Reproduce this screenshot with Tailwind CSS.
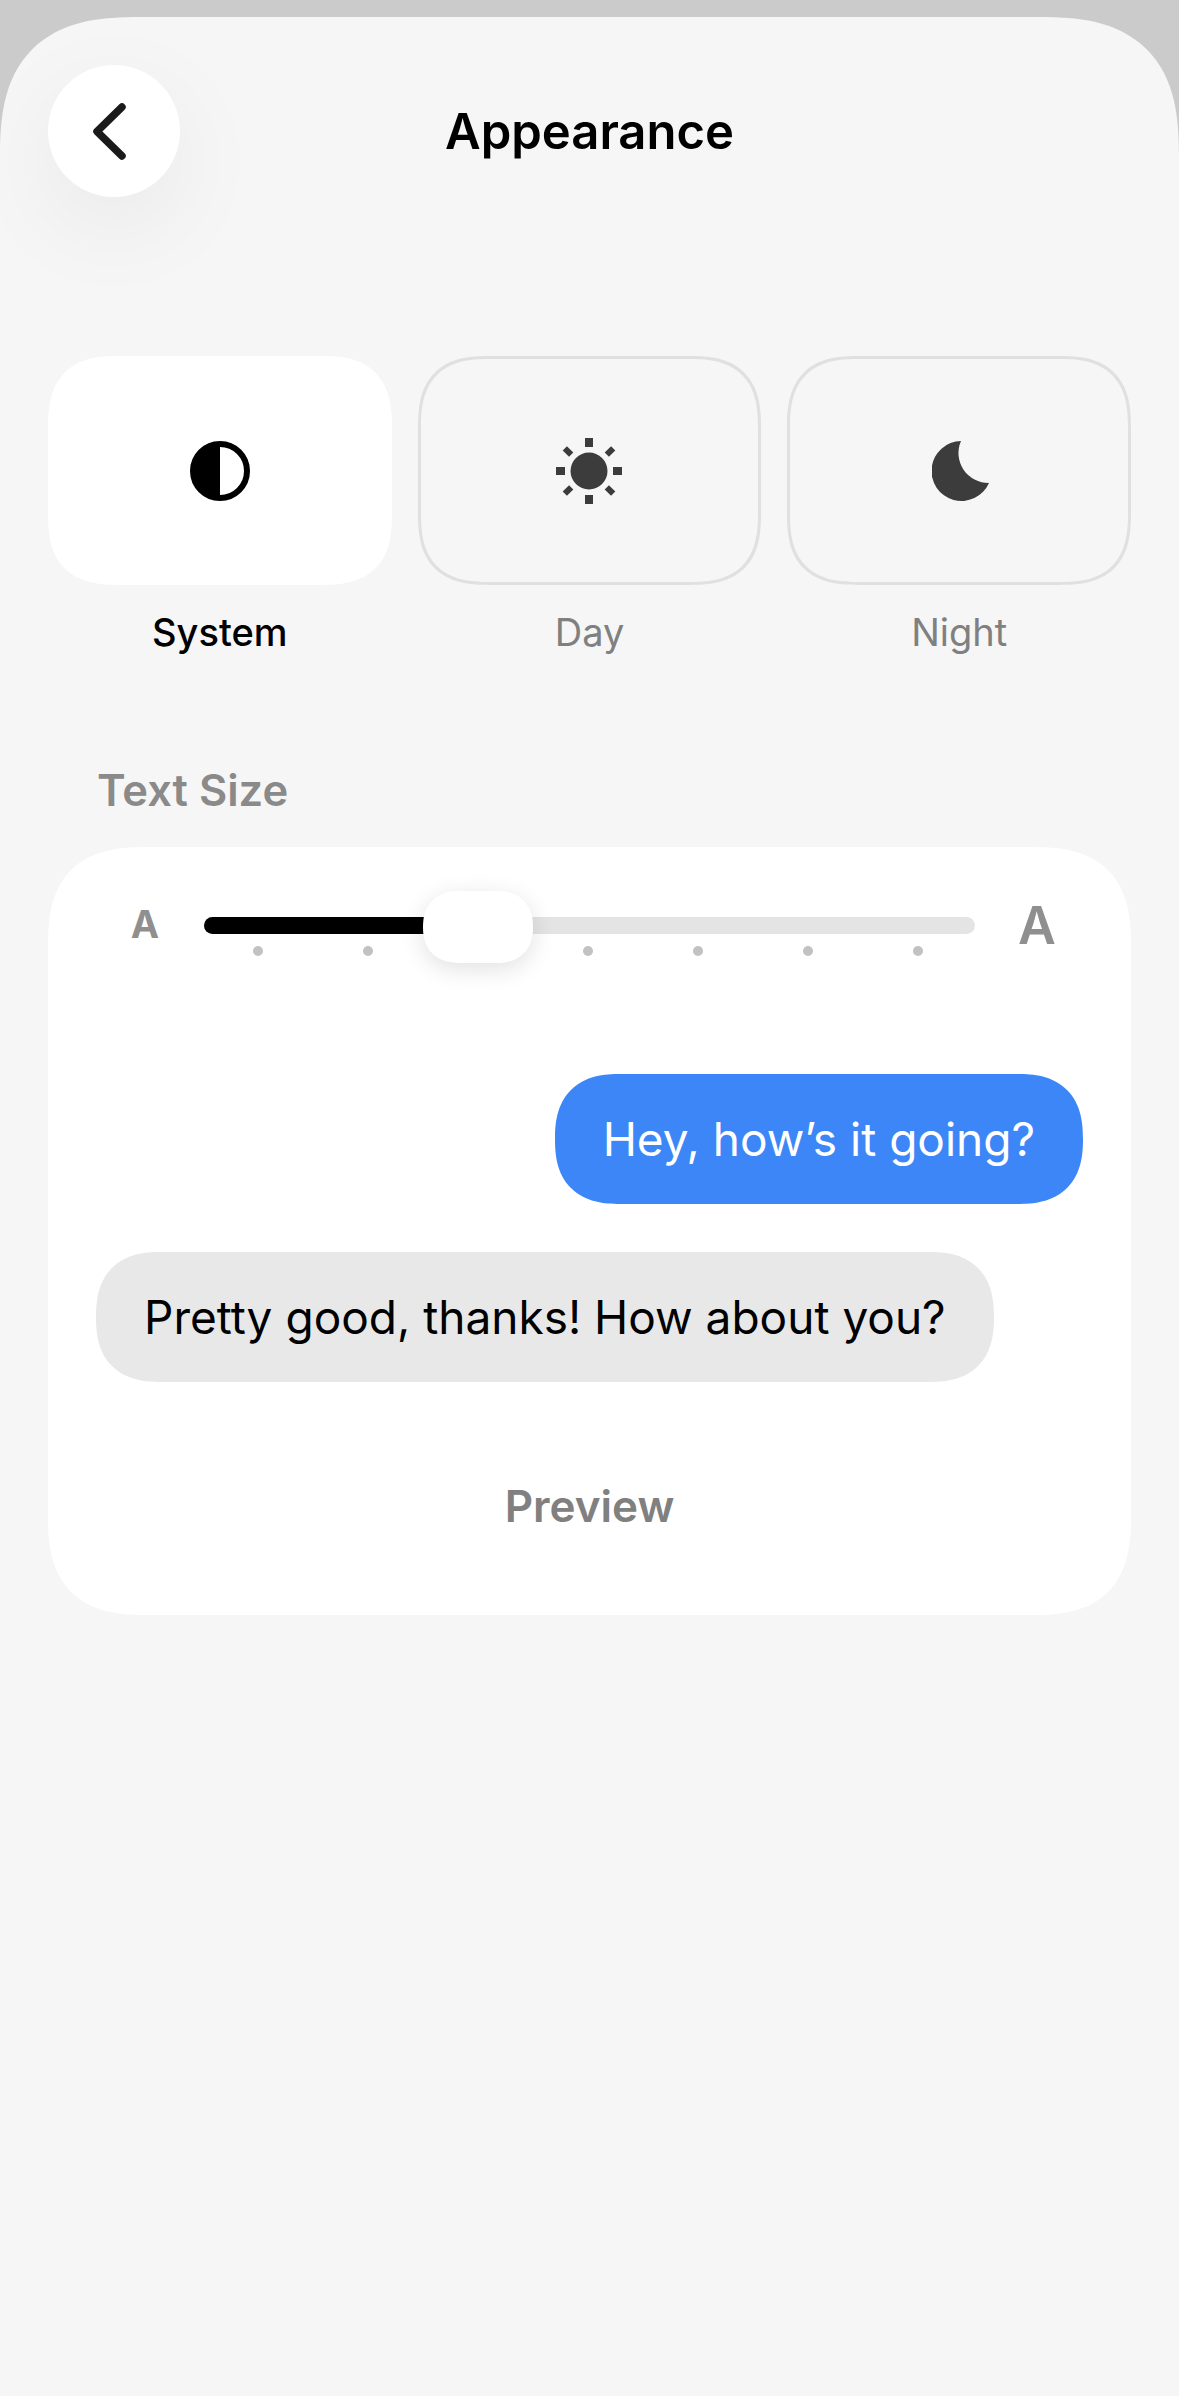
<!DOCTYPE html>
<html lang="en">
  <head>
    <meta charset="UTF-8" />
    <meta name="viewport" content="width=device-width, initial-scale=1.0" />
    <title>Appearance</title>
    <script src="https://cdn.jsdelivr.net/npm/@tailwindcss/browser@4"></script>
  </head>
  <body class="bg-[#cbcbcb] font-[Inter,sans-serif] pt-[17px] h-[2396px] overflow-hidden">
    <div class="bg-[#f6f6f6] h-[2379px] rounded-t-[140px] [corner-shape:superellipse(1.4)] px-[48px] pt-[48px]">
      <!-- header -->
      <div class="flex items-center">
        <button class="w-[132px] h-[132px] rounded-full bg-white shadow-[0_30px_100px_rgba(0,0,0,0.06)] flex items-center justify-center shrink-0">
          <svg class="mr-[9px]" width="33" height="57" viewBox="0 0 33 57" fill="none" stroke="#1a1a1a" stroke-width="7.5" stroke-linecap="round" stroke-linejoin="round">
            <path d="M29 4 L4 28.5 L29 53" />
          </svg>
        </button>
        <h1 class="flex-1 text-center text-[49px] leading-[76px] mt-[2px] font-semibold text-black pr-[132px]">Appearance</h1>
      </div>

      <!-- theme options -->
      <div class="grid grid-cols-3 gap-[26px] mt-[159px]">
        <div class="flex flex-col items-center">
          <div class="w-full h-[229px] rounded-[72px] [corner-shape:superellipse(1.4)] bg-white flex items-center justify-center">
            <svg width="60" height="60" viewBox="0 0 60 60">
              <circle cx="30" cy="30" r="27" fill="none" stroke="#000" stroke-width="6" />
              <path d="M30 3 A27 27 0 0 0 30 57 Z" fill="#000" />
            </svg>
          </div>
          <span class="mt-[25px] text-[38px] leading-[44px] font-medium text-black">System</span>
        </div>
        <div class="flex flex-col items-center">
          <div class="w-full h-[229px] rounded-[72px] [corner-shape:superellipse(1.4)] border-[3px] border-[#e0e0e0] flex items-center justify-center">
            <svg width="66" height="66" viewBox="0 0 66 66" fill="#3c3c3c">
              <circle cx="33" cy="33" r="18.5" />
              <rect x="29" y="0" width="8" height="9" />
              <rect x="29" y="57" width="8" height="9" />
              <rect x="0" y="29" width="9" height="8" />
              <rect x="57" y="29" width="9" height="8" />
              <rect x="9" y="9" width="6" height="9" transform="rotate(-45 12 13.5)" />
              <rect x="51" y="9" width="6" height="9" transform="rotate(45 54 13.5)" />
              <rect x="9" y="48" width="6" height="9" transform="rotate(45 12 52.5)" />
              <rect x="51" y="48" width="6" height="9" transform="rotate(-45 54 52.5)" />
            </svg>
          </div>
          <span class="mt-[25px] text-[38px] leading-[44px] text-[#808080]">Day</span>
        </div>
        <div class="flex flex-col items-center">
          <div class="w-full h-[229px] rounded-[72px] [corner-shape:superellipse(1.4)] border-[3px] border-[#e0e0e0] flex items-center justify-center">
            <svg class="ml-[3px]" width="58" height="60" viewBox="0 0 58 60" fill="#3c3c3c">
              <path d="M29 0 A30 30 0 1 0 57 42 A30 30 0 0 1 29 0 Z" />
            </svg>
          </div>
          <span class="mt-[25px] text-[38px] leading-[44px] text-[#808080]">Night</span>
        </div>
      </div>

      <!-- text size -->
      <h2 class="mt-[111px] ml-[49px] text-[43.5px] leading-[50px] font-semibold text-[#8a8a8a]">Text Size</h2>
      <div class="mt-[32px] h-[768px] rounded-[100px] [corner-shape:superellipse(1.4)] bg-white px-[48px] pt-[44px]">
        <div class="flex items-start h-[72px] pl-[31px] pr-[36px]">
          <span class="w-[36px] mt-[10px] text-[38px] leading-[46px] font-bold text-[#8f8f8f] text-center shrink-0">A</span>
          <div class="relative ml-[41px] w-[771px] h-[72px] shrink-0">
            <div class="relative top-[26px] h-[17px] rounded-full bg-[#e4e4e4]">
              <div class="w-[270px] h-[17px] rounded-full bg-black"></div>
            </div>
            <div class="absolute left-[49px] top-[55px] w-[670px] flex justify-between">
              <i class="block w-[10px] h-[10px] rounded-full bg-[#c2c2c2]"></i>
              <i class="block w-[10px] h-[10px] rounded-full bg-[#c2c2c2]"></i>
              <i class="block w-[10px] h-[10px] rounded-full bg-[#c2c2c2]"></i>
              <i class="block w-[10px] h-[10px] rounded-full bg-[#c2c2c2]"></i>
              <i class="block w-[10px] h-[10px] rounded-full bg-[#c2c2c2]"></i>
              <i class="block w-[10px] h-[10px] rounded-full bg-[#c2c2c2]"></i>
              <i class="block w-[10px] h-[10px] rounded-full bg-[#c2c2c2]"></i>
            </div>
            <div class="absolute left-[219px] top-0 w-[110px] h-[72px] rounded-[36px] [corner-shape:superellipse(1.2)] bg-white shadow-[0_6px_24px_rgba(0,0,0,0.12)]"></div>
          </div>
          <span class="ml-[36px] w-[52px] mt-[4px] text-[52px] leading-[62px] font-semibold text-[#8f8f8f] text-center shrink-0">A</span>
        </div>

        <div class="flex flex-col mt-[111px]">
          <div class="self-end h-[130px] rounded-[65px] [corner-shape:superellipse(1.3)] bg-[#3c86f8] px-[48px] flex items-center text-[46px] text-white whitespace-nowrap">Hey, how’s it going?</div>
          <div class="self-start mt-[48px] h-[130px] rounded-[65px] [corner-shape:superellipse(1.3)] bg-[#e8e8e8] px-[48px] flex items-center text-[46px] text-black whitespace-nowrap">Pretty good, thanks! How about you?</div>
        </div>
        <div class="mt-[98px] text-center text-[44px] leading-[52px] font-semibold text-[#808080]">Preview</div>
      </div>
    </div>
  </body>
</html>
